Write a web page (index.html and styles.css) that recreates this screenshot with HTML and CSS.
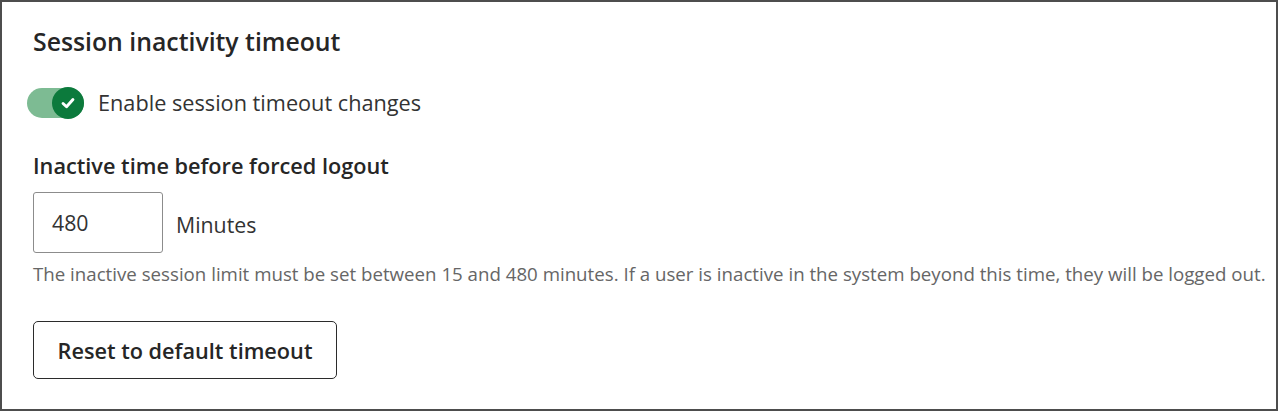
FILE: index.html
```html
<!DOCTYPE html>
<html lang="en">
<head>
<meta charset="utf-8">
<title>Session inactivity timeout</title>
<link rel="stylesheet" href="styles.css">
</head>
<body>
<div class="frame">
  <section class="panel">
    <h2 class="title">Session inactivity timeout</h2>
    <label class="toggle-row">
      <span class="toggle" aria-checked="true" role="switch">
        <span class="thumb">
          <svg class="check" viewBox="0 0 16 16" width="18" height="18" aria-hidden="true">
            <path d="M3.6 8.4 L6.7 11.3 L12.4 4.9" fill="none" stroke="#fff" stroke-width="2.6" stroke-linecap="round" stroke-linejoin="round"/>
          </svg>
        </span>
      </span>
      <span class="toggle-label">Enable session timeout changes</span>
    </label>
    <div class="field">
      <div class="field-label">Inactive time before forced logout</div>
      <div class="input-row">
        <div class="input">480</div>
        <span class="unit">Minutes</span>
      </div>
      <p class="help">The inactive session limit must be set between 15 and 480 minutes. If a user is inactive in the system beyond this time, they will be logged out.</p>
    </div>
    <button class="reset" type="button">Reset to default timeout</button>
  </section>
</div>
</body>
</html>
```
FILE: styles.css
```css
* { box-sizing: border-box; }
html, body { margin: 0; padding: 0; background: #ffffff; }
body {
  font-family: "Open Sans", "Noto Sans", sans-serif;
  color: #262626;
}
.frame {
  width: 1278px;
  height: 411px;
  border: 2px solid #4d4d4d;
  background: #ffffff;
}
.panel {
  padding: 22px 0 0 31px;
  display: flex;
  flex-direction: column;
  align-items: flex-start;
}
.title {
  margin: 0;
  font-size: 24.8px;
  font-weight: 600;
  line-height: 34px;
  color: #262626;
}
.toggle-row {
  margin-top: 30px;
  display: flex;
  align-items: center;
  gap: 14px;
  margin-left: -6px;
}
.toggle {
  width: 57px;
  height: 30px;
  border-radius: 15px;
  background: #7dbb93;
  display: flex;
  align-items: center;
  justify-content: flex-end;
}
.thumb {
  width: 32px;
  height: 32px;
  border-radius: 50%;
  background: #0c7a3c;
  display: flex;
  align-items: center;
  justify-content: center;
}
.check { display: block; }
.toggle-label {
  font-size: 21.7px;
  line-height: 30px;
  color: #333333;
}
.field {
  margin-top: 33px;
  display: flex;
  flex-direction: column;
  align-items: flex-start;
}
.field-label {
  font-size: 21.7px;
  font-weight: 600;
  line-height: 30px;
  color: #262626;
}
.input-row {
  margin-top: 11px;
  display: flex;
  align-items: center;
  gap: 13px;
}
.input {
  width: 130px;
  height: 61px;
  border: 1px solid #8c8c8c;
  border-radius: 3px;
  padding: 0 18px;
  display: flex;
  align-items: center;
  font-size: 21.3px;
  color: #333333;
}
.unit {
  font-size: 21.3px;
  color: #333333;
  margin-top: 3px;
}
.help {
  margin: 8px 0 0;
  font-size: 18.7px;
  line-height: 26px;
  color: #666666;
}
.reset {
  margin-top: 34px;
  width: 304px;
  height: 58px;
  border: 1.5px solid #2b2b2b;
  border-radius: 5px;
  background: #ffffff;
  font-family: "Open Sans", "Noto Sans", sans-serif;
  font-size: 21.7px;
  font-weight: 600;
  color: #262626;
  padding: 0;
}
```
